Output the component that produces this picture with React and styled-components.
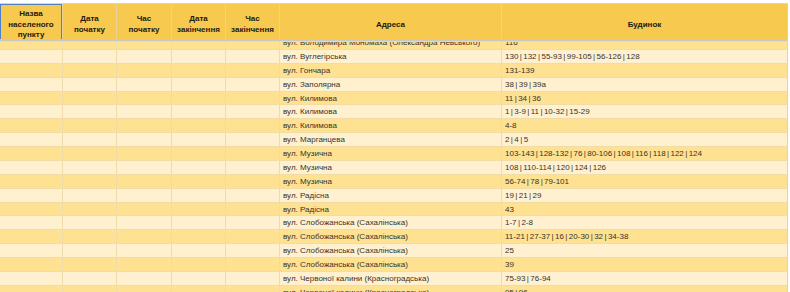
import React from "react";
import styled, { createGlobalStyle } from "styled-components";

const COLS = "63px 54px 55px 54px 54px 222px 286px";

const rows = [
  ["вул. Володимира Мономаха (Олександра Невського)", "116"],
  ["вул. Вуглегірська", "130|132|55-93|99-105|56-126|128"],
  ["вул. Гончара", "131-139"],
  ["вул. Заполярна", "38|39|39а"],
  ["вул. Килимова", "11|34|36"],
  ["вул. Килимова", "1|3-9|11|10-32|15-29"],
  ["вул. Килимова", "4-8"],
  ["вул. Марганцева", "2|4|5"],
  ["вул. Музична", "103-143|128-132|76|80-106|108|116|118|122|124"],
  ["вул. Музична", "108|110-114|120|124|126"],
  ["вул. Музична", "56-74|78|79-101"],
  ["вул. Радісна", "19|21|29"],
  ["вул. Радісна", "43"],
  ["вул. Слобожанська (Сахалінська)", "1-7|2-8"],
  ["вул. Слобожанська (Сахалінська)", "11-21|27-37|16|20-30|32|34-38"],
  ["вул. Слобожанська (Сахалінська)", "25"],
  ["вул. Слобожанська (Сахалінська)", "39"],
  ["вул. Червоної калини (Красноградська)", "75-93|76-94"],
  ["вул. Червоної калини (Красноградська)", "95|96"],
];

const headers = [
  "Назва\nнаселеного\nпункту",
  "Дата\nпочатку",
  "Час\nпочатку",
  "Дата\nзакінчення",
  "Час\nзакінчення",
  "Адреса",
  "Будинок",
];

// house numbers are split by "|" — give the bar a bit of air like in Excel
const Houses = ({ value }) => {
  const parts = value.split("|");
  return parts.map((p, i) => (
    <React.Fragment key={i}>
      {i > 0 && <Pipe>|</Pipe>}
      {p}
    </React.Fragment>
  ));
};

const App = () => {
  return (
    <>
      <GlobalStyle />
      <Sheet>
        <HeadRow>
          {headers.map((h, i) => (
            <HeadCell key={i} $selected={i === 0}>
              {h}
            </HeadCell>
          ))}
        </HeadRow>
        <FreezeLine />
        <Body>
          {rows.map(([street, house], i) => (
            <Row key={i} $light={i % 2 === 1} $first={i === 0}>
              <Cell />
              <Cell />
              <Cell />
              <Cell />
              <Cell />
              <Cell>{street}</Cell>
              <Cell>
                <Houses value={house} />
              </Cell>
            </Row>
          ))}
        </Body>
      </Sheet>
    </>
  );
};

const GlobalStyle = createGlobalStyle`
  html, body {
    margin: 0;
    padding: 0;
    background: #ffffff;
    overflow: hidden;
  }
  * {
    box-sizing: border-box;
  }
`;

const Sheet = styled.div`
  width: 790px;
  height: 292px;
  padding: 3px 2px 0 0;
  background: #ffffff;
  display: flex;
  flex-direction: column;
  overflow: hidden;
  font-family: "Liberation Sans", Arial, sans-serif;
`;

const HeadRow = styled.div`
  display: grid;
  grid-template-columns: ${COLS};
  height: 36px;
  background: #f7c94e;
  border-top: 1px solid #d6d6d6;
  border-right: 1px solid #d0d0d0;
`;

const HeadCell = styled.div`
  display: flex;
  align-items: center;
  justify-content: center;
  padding-top: 5px;
  text-align: center;
  white-space: pre-line;
  font-size: 8px;
  line-height: 10.7px;
  font-weight: 700;
  color: #1e1a10;
  border-right: 1px solid #e9d39a;
  box-shadow: ${({ $selected }) => ($selected ? "inset 0 0 0 1px #4f82c4" : "none")};
`;

const FreezeLine = styled.div`
  height: 3px;
  background: #c9c9c6;
  border-bottom: 1px solid #dcdad2;
`;

const Body = styled.div`
  flex: 1;
  overflow: hidden;
  border-right: 1px solid #d8d4c4;
`;

const Row = styled.div`
  display: grid;
  grid-template-columns: ${COLS};
  height: 13.88px;
  margin-top: ${({ $first }) => ($first ? "-6px" : "0")};
  background: ${({ $light }) => ($light ? "#fff1cf" : "#ffe192")};
  border-bottom: 1px solid #f1dca6;
`;

const Cell = styled.div`
  padding: 0 3px;
  font-size: 8px;
  line-height: 13.5px;
  color: #38322a;
  white-space: nowrap;
  overflow: hidden;
  border-right: 1px solid #eedcaa;
`;

const Pipe = styled.span`
  margin: 0 1.4px;
`;

export default App;
